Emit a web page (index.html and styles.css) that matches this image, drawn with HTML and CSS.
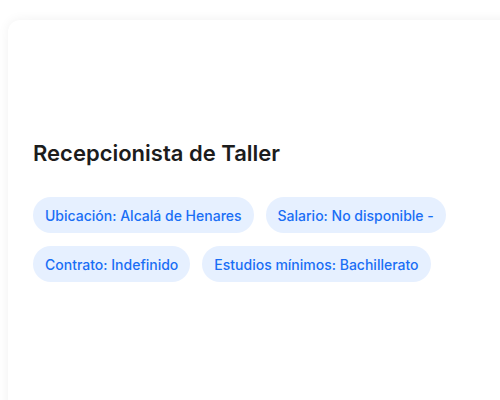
FILE: index.html
```html
<!DOCTYPE html>
<html lang="es">
<head>
<meta charset="utf-8">
<title>Recepcionista de Taller</title>
<link rel="stylesheet" href="styles.css">
</head>
<body>
  <main class="page">
    <article class="job-card">
      <div class="job-card__media"></div>
      <h1 class="job-card__title">Recepcionista de Taller</h1>
      <ul class="job-card__tags">
        <li class="tag">Ubicación: Alcalá de Henares</li>
        <li class="tag">Salario: No disponible -</li>
        <li class="tag">Contrato: Indefinido</li>
        <li class="tag">Estudios mínimos: Bachillerato</li>
      </ul>
    </article>
  </main>
</body>
</html>
```

FILE: styles.css
```css
html, body {
  margin: 0;
  height: 100%;
  overflow: hidden;
  background: #ffffff;
}

body {
  font-family: Inter, "Noto Sans", sans-serif;
}

.page {
  padding: 20px 0 0 8px;
}

.job-card {
  width: 520px;
  min-height: 420px;
  background: #ffffff;
  border-radius: 12px;
  box-shadow: 0 0 12px rgba(0, 0, 0, 0.06);
  padding: 0 25px;
  box-sizing: border-box;
}

.job-card__media {
  height: 119px;
}

.job-card__title {
  margin: 0 0 30px;
  font-size: 22px;
  font-weight: 600;
  line-height: 28px;
  color: #1c1c1c;
}

.job-card__tags {
  list-style: none;
  margin: 0;
  padding: 0;
  display: flex;
  flex-wrap: wrap;
  gap: 13px 12px;
  max-width: 430px;
}

.tag {
  height: 36px;
  display: flex;
  align-items: center;
  padding: 0 12px;
  border-radius: 18px;
  background: #e6f0ff;
  color: #1a6ef5;
  font-size: 14px;
  font-weight: 500;
}
```
